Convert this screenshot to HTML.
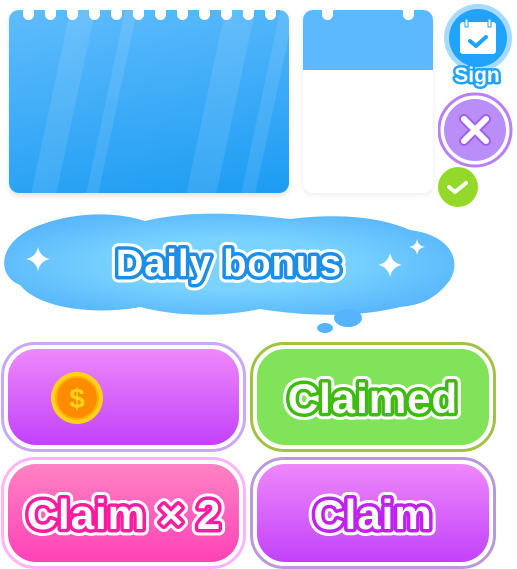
<!DOCTYPE html><html><head><style>
*{margin:0;padding:0;box-sizing:border-box}
body{width:517px;height:569px;background:#fff;position:relative;overflow:hidden;font-family:"Liberation Sans",sans-serif}
.a{position:absolute}
.hole{position:absolute;top:0;width:11px;height:11px;margin-top:-1px;background:#fff;border-radius:0 0 6px 6px}
.btn{position:absolute;border-radius:34px;border:3px solid;background:#fff;padding:4px}
.btn>div{width:100%;height:100%;border-radius:28px}
.bt{position:absolute;left:0;top:0}
</style></head><body>
<div class="a" style="left:9px;top:10px;width:280px;height:183px;border-radius:10px;background:linear-gradient(170deg,#60bcfd,#1c9cf2);box-shadow:0 3px 6px rgba(0,0,0,.12);overflow:hidden">
<div class="a" style="left:40px;top:0;width:25px;height:200px;background:rgba(255,255,255,.1);transform:skewX(-12deg)"></div>
<div class="a" style="left:95px;top:0;width:12px;height:200px;background:rgba(255,255,255,.1);transform:skewX(-12deg)"></div>
<div class="a" style="left:195px;top:0;width:30px;height:200px;background:rgba(255,255,255,.1);transform:skewX(-12deg)"></div>
<div class="a" style="left:250px;top:0;width:14px;height:200px;background:rgba(255,255,255,.1);transform:skewX(-12deg)"></div>
<div class="hole" style="left:14px"></div><div class="hole" style="left:36px"></div><div class="hole" style="left:58px"></div><div class="hole" style="left:80px"></div><div class="hole" style="left:102px"></div><div class="hole" style="left:124px"></div><div class="hole" style="left:146px"></div><div class="hole" style="left:168px"></div><div class="hole" style="left:190px"></div><div class="hole" style="left:212px"></div><div class="hole" style="left:234px"></div><div class="hole" style="left:256px"></div>
</div>
<div class="a" style="left:303px;top:10px;width:130px;height:183px;border-radius:10px;background:#fff;box-shadow:0 2px 6px rgba(0,0,0,.08);overflow:hidden">
<div class="a" style="left:0;top:0;width:130px;height:60px;background:#5cb9fd"></div>
<div class="hole" style="left:19px"></div><div class="hole" style="left:100px"></div>
</div>
<svg class="a" style="left:438px;top:0" width="79" height="210">
<circle cx="40" cy="38" r="34" fill="#a6dbff"/>
<circle cx="40" cy="38" r="29" fill="#21a3fb"/>
<rect x="22" y="22" width="36" height="32" rx="3" fill="#fff"/>
<rect x="27" y="19" width="3" height="8" fill="#fff" stroke="#21a3fb"/><rect x="50" y="19" width="3" height="8" fill="#fff" stroke="#21a3fb"/>
<path d="M32 41l6 5 10-9" stroke="#21a3fb" stroke-width="4" fill="none" stroke-linecap="round" stroke-linejoin="round"/>
<text x="39" y="82" text-anchor="middle" font-family="Liberation Sans" font-weight="bold" font-size="21" fill="#fff" stroke="#21a3fb" stroke-width="5" paint-order="stroke" stroke-linejoin="round">Sign</text>
<circle cx="37" cy="130" r="36" fill="#fff" stroke="#b97ff8" stroke-width="3"/>
<circle cx="37" cy="130" r="31" fill="#b98ef9"/>
<path d="M26 119l22 22M48 119l-22 22" stroke="#a35ef0" stroke-width="10" stroke-linecap="round"/>
<path d="M26 119l22 22M48 119l-22 22" stroke="#fff" stroke-width="6" stroke-linecap="round"/>
<circle cx="20" cy="187" r="20" fill="#94d92a"/>
<path d="M11 187l6 5 11-9" stroke="#fff" stroke-width="4" fill="none" stroke-linecap="round" stroke-linejoin="round"/>
</svg>
<svg class="a" style="left:0;top:205px" width="470" height="130">
<defs><radialGradient id="g" cx=".5" cy=".5" r=".6"><stop offset=".4" stop-color="#7ad3ff"/><stop offset="1" stop-color="#55b4fb"/></radialGradient></defs>
<path d="M40 20C80 5 120 8 145 16C190 5 240 8 290 14C340 8 380 12 410 25C450 30 462 55 450 75C435 95 420 100 400 102C360 112 310 112 260 104C220 112 180 112 140 102C100 110 40 105 20 80C-5 70 -2 35 40 20Z" fill="url(#g)"/>
<ellipse cx="348" cy="113" rx="14" ry="9" fill="#55b4fb"/><ellipse cx="325" cy="123" rx="8" ry="5" fill="#55b4fb"/>
<path d="M38 42q2 10 12 12q-10 2-12 12q-2-10-12-12q10-2 12-12z" fill="#fff"/>
<path d="M390 48q2 10 12 12q-10 2-12 12q-2-10-12-12q10-2 12-12z" fill="#fff"/>
<path d="M417 34q1 7 8 8q-7 1-8 8q-1-7-8-8q7-1 8-8z" fill="#fff"/>
<g font-family="Liberation Sans" font-weight="bold" font-size="38" text-anchor="middle" letter-spacing="1" stroke-linejoin="round">
<text x="229" y="71" fill="#fff" stroke="#fff" stroke-width="13">Daily bonus</text>
<text x="229" y="71" fill="#fff" stroke="#1c8de8" stroke-width="7" paint-order="stroke">Daily bonus</text>
</g>
</svg>
<div class="btn" style="left:1px;top:342px;width:245px;height:110px;border-color:#c9a8f8"><div style="background:linear-gradient(#ee88fa,#c242fa)"></div></div>
<svg class="a" style="left:50px;top:371px" width="54" height="54"><circle cx="27" cy="27" r="26" fill="#ffd21a"/><circle cx="27" cy="27" r="21" fill="#ff8c00" stroke="#ffb000" stroke-width="2"/><text x="27" y="37" text-anchor="middle" font-family="Liberation Sans" font-weight="bold" font-size="28" fill="#ffd21a">$</text></svg>
<div class="btn" style="left:250px;top:342px;width:246px;height:110px;border-color:#a2c244"><div style="background:#80e35a"></div></div>
<div class="btn" style="left:1px;top:457px;width:245px;height:112px;border-color:#ffb3f8"><div style="background:linear-gradient(#ff82c2,#ff42b8)"></div></div>
<div class="btn" style="left:250px;top:457px;width:246px;height:112px;border-color:#b89ad8"><div style="background:linear-gradient(#ee88fa,#c242fa)"></div></div>
<svg class="a" style="left:0;top:0" width="517" height="569">
<g font-family="Liberation Sans" font-weight="bold" font-size="42" text-anchor="middle" letter-spacing="1" stroke-linejoin="round">
<text x="373" y="413" fill="#fff" stroke="#fff" stroke-width="13">Claimed</text>
<text x="373" y="413" fill="#fff" stroke="#3dbb10" stroke-width="7" paint-order="stroke">Claimed</text>
<text x="124" y="529" fill="#fff" stroke="#fff" stroke-width="13">Claim × 2</text>
<text x="124" y="529" fill="#fff" stroke="#ff1aa0" stroke-width="7" paint-order="stroke">Claim × 2</text>
<text x="373" y="529" fill="#fff" stroke="#fff" stroke-width="13">Claim</text>
<text x="373" y="529" fill="#fff" stroke="#c020f0" stroke-width="7" paint-order="stroke">Claim</text>
</g></svg>
</body></html>
